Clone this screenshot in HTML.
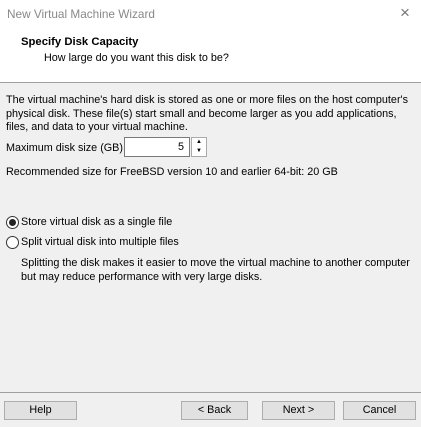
<html><head><style>
body{margin:0;width:421px;height:427px;background:#f0f0f0;font-family:"Liberation Sans",sans-serif;font-size:10.8px;color:#000;position:relative;overflow:hidden}
.a{position:absolute;white-space:nowrap}
.btn{position:absolute;top:401px;height:19px;border:1px solid #adadad;background:#e1e1e1;text-align:center;line-height:17px;box-sizing:border-box}
.r{position:absolute;width:11px;height:11px;border:1px solid #333;border-radius:50%;background:#fff}
</style></head><body>
<div class="a" style="left:0;top:0;width:421px;height:82px;background:#fff"></div>
<div class="a" style="left:0;top:82px;width:421px;height:1px;background:#a0a0a0"></div>
<div class="a" style="left:7px;top:7px;color:#888;font-size:11.8px">New Virtual Machine Wizard</div>
<div class="a" style="left:400px;top:3px;color:#777;font-size:17px">×</div>
<div class="a" style="left:21px;top:36px;font-weight:bold;font-size:11.3px">Specify Disk Capacity</div>
<div class="a" style="left:44px;top:52px">How large do you want this disk to be?</div>
<div class="a" style="left:6px;top:94px;line-height:13.5px">The virtual machine's hard disk is stored as one or more files on the host computer's<br>physical disk. These file(s) start small and become larger as you add applications,<br>files, and data to your virtual machine.</div>
<div class="a" style="left:6px;top:142px">Maximum disk size (GB):</div>
<div class="a" style="left:124px;top:137px;width:66px;height:20px;border:1px solid #7a7a7a;background:#fff;box-sizing:border-box;text-align:right;padding-right:5px;line-height:18px">5</div>
<div class="a" style="left:191px;top:137px;width:16px;height:20px;border:1px solid #aaa;background:#fff;box-sizing:border-box"><div style="font-size:6px;line-height:9px;text-align:center">▲<br>▼</div></div>
<div class="a" style="left:6px;top:166px">Recommended size for FreeBSD version 10 and earlier 64-bit: 20 GB</div>
<div class="r" style="left:6px;top:216px"><div style="margin:2px;width:7px;height:7px;border-radius:50%;background:#222"></div></div>
<div class="a" style="left:21px;top:216px">Store virtual disk as a single file</div>
<div class="r" style="left:6px;top:236px"></div>
<div class="a" style="left:21px;top:236px">Split virtual disk into multiple files</div>
<div class="a" style="left:21px;top:256px;line-height:14px">Splitting the disk makes it easier to move the virtual machine to another computer<br>but may reduce performance with very large disks.</div>
<div class="a" style="left:0;top:392px;width:421px;height:1px;background:#a0a0a0"></div>
<div class="btn" style="left:4px;width:73px">Help</div>
<div class="btn" style="left:181px;width:67px">&lt; Back</div>
<div class="btn" style="left:262px;width:73px">Next &gt;</div>
<div class="btn" style="left:343px;width:73px">Cancel</div>
</body></html>
